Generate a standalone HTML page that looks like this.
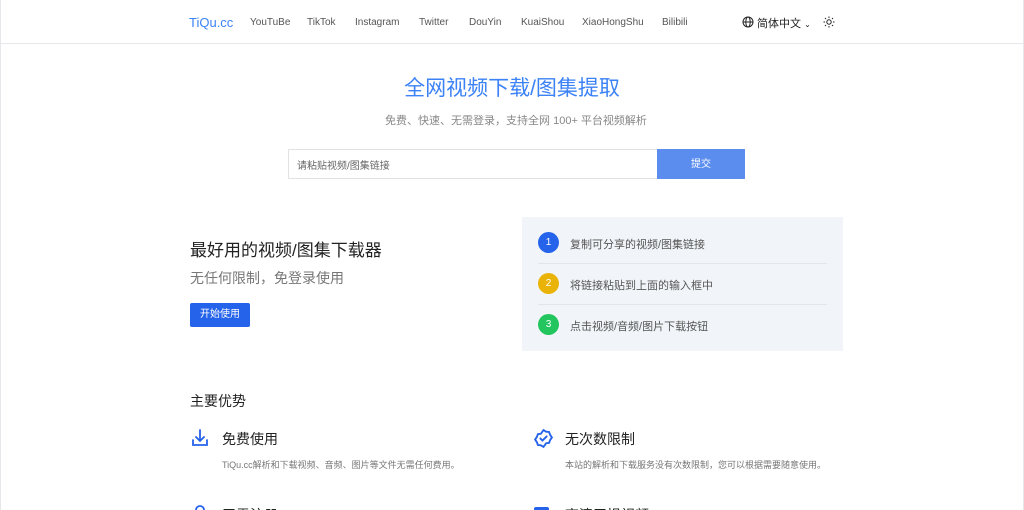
<!DOCTYPE html>
<html><head><meta charset="utf-8"><style>
*{margin:0;padding:0;box-sizing:border-box}
html,body{width:1024px;height:510px;overflow:hidden;background:#fff}
body{font-family:"Liberation Sans","Noto Sans CJK SC",sans-serif;color:#333;position:relative}
.a{position:absolute;white-space:nowrap}
.hdr{position:absolute;left:0;top:0;width:1024px;height:44px;border-bottom:1px solid #e8e8ea}
.nav{font-size:10px;color:#555;top:17px}
.num{position:absolute;left:16px;width:21px;height:21px;border-radius:50%;color:#fff;font-size:10px;text-align:center;line-height:21px}
.st{position:absolute;left:48px;font-size:11px;color:#555}
.ln{position:absolute;left:16px;right:16px;height:1px;background:#e2e6ea}
</style></head><body>
<div class="a" style="left:0;top:0;width:1px;height:510px;background:#e5e7eb"></div>
<div class="a" style="right:0;top:0;width:1px;height:510px;background:#e5e7eb"></div>
<div class="hdr"></div>
<div class="a" style="left:189px;top:15px;font-size:13px;color:#3b82f6">TiQu.cc</div>
<div class="a nav" style="left:250px">YouTuBe</div>
<div class="a nav" style="left:307px">TikTok</div>
<div class="a nav" style="left:355px">Instagram</div>
<div class="a nav" style="left:419px">Twitter</div>
<div class="a nav" style="left:469px">DouYin</div>
<div class="a nav" style="left:521px">KuaiShou</div>
<div class="a nav" style="left:582px">XiaoHongShu</div>
<div class="a nav" style="left:662px">Bilibili</div>
<svg class="a" style="left:742px;top:16px" width="12" height="12" viewBox="0 0 12 12" fill="none" stroke="#222" stroke-width="1"><circle cx="6" cy="6" r="5"/><ellipse cx="6" cy="6" rx="2.2" ry="5"/><path d="M1 6h10"/></svg>
<div class="a" style="left:757px;top:15px;font-size:11px;color:#222">简体中文 <span style="font-size:8px">⌄</span></div>
<svg class="a" style="left:823px;top:16px" width="12" height="12" viewBox="0 0 12 12" fill="none" stroke="#222" stroke-width="1"><circle cx="6" cy="6" r="2.2"/><path d="M6 0.5v1.5M6 10v1.5M0.5 6h1.5M10 6h1.5M2 2l1 1M9 9l1 1M2 10l1-1M9 3l1-1"/></svg>

<div class="a" style="left:0;width:1024px;text-align:center;top:72px;font-size:21px;color:#3b82f6">全网视频下载/图集提取</div>
<div class="a" style="left:0;width:1032px;text-align:center;top:112px;font-size:11px;color:#888">免费、快速、无需登录，支持全网 100+ 平台视频解析</div>
<div class="a" style="left:288px;top:149px;width:370px;height:30px;border:1px solid #e2e2e2;font-size:10px;color:#666;padding:7px 8px">请粘贴视频/图集链接</div>
<div class="a" style="left:657px;top:149px;width:88px;height:30px;background:#5b8def;color:#fff;font-size:10px;text-align:center;line-height:31px">提交</div>

<div class="a" style="left:190px;top:236px;font-size:17px;color:#222">最好用的视频/图集下载器</div>
<div class="a" style="left:190px;top:268px;font-size:14px;color:#777">无任何限制，免登录使用</div>
<div class="a" style="left:190px;top:303px;width:60px;height:24px;background:#2563eb;color:#fff;font-size:10px;text-align:center;line-height:24px;border-radius:2px">开始使用</div>

<div class="a" style="left:522px;top:217px;width:321px;height:134px;background:#f1f5f9">
<div class="num" style="top:15px;background:#2563eb">1</div><div class="st" style="top:19px">复制可分享的视频/图集链接</div>
<div class="ln" style="top:46px"></div>
<div class="num" style="top:56px;background:#eab308">2</div><div class="st" style="top:60px">将链接粘贴到上面的输入框中</div>
<div class="ln" style="top:87px"></div>
<div class="num" style="top:97px;background:#22c55e">3</div><div class="st" style="top:101px">点击视频/音频/图片下载按钮</div>
</div>

<div class="a" style="left:190px;top:391px;font-size:14px;color:#222">主要优势</div>
<svg class="a" style="left:190px;top:428px" width="20" height="20" viewBox="0 0 20 20" fill="none" stroke="#2563eb" stroke-width="1.8" stroke-linecap="round"><path d="M10 2v11M6 9l4 4 4-4M3 12v5h14v-5"/></svg>
<div class="a" style="left:222px;top:429px;font-size:14px;color:#222">免费使用</div>
<div class="a" style="left:222px;top:458px;font-size:9px;color:#777">TiQu.cc解析和下载视频、音频、图片等文件无需任何费用。</div>
<svg class="a" style="left:533px;top:428px" width="21" height="21" viewBox="0 0 20 20" fill="none" stroke="#2563eb" stroke-width="1.8" stroke-linecap="round"><path d="M10 2l2.5 1.5 2.8 0.3 1 2.7 1.7 2.5-1.7 2.5-1 2.7-2.8.3L10 18l-2.5-1.5-2.8-.3-1-2.7L2 11l1.7-2.5 1-2.7 2.8-.3z"/><path d="M7 10l2 2 4-4"/></svg>
<div class="a" style="left:565px;top:429px;font-size:14px;color:#222">无次数限制</div>
<div class="a" style="left:565px;top:458px;font-size:9px;color:#777">本站的解析和下载服务没有次数限制，您可以根据需要随意使用。</div>
<svg class="a" style="left:192px;top:504px" width="16" height="10" viewBox="0 0 16 10" fill="none" stroke="#2563eb" stroke-width="1.8"><circle cx="8" cy="6" r="4"/></svg>
<div class="a" style="left:222px;top:505px;font-size:14px;color:#222">无需注册</div>
<div class="a" style="left:534px;top:507px;width:15px;height:10px;background:#2563eb;border-radius:2px"></div>
<div class="a" style="left:565px;top:505px;font-size:14px;color:#222">高清无损视频</div>
</body></html>
